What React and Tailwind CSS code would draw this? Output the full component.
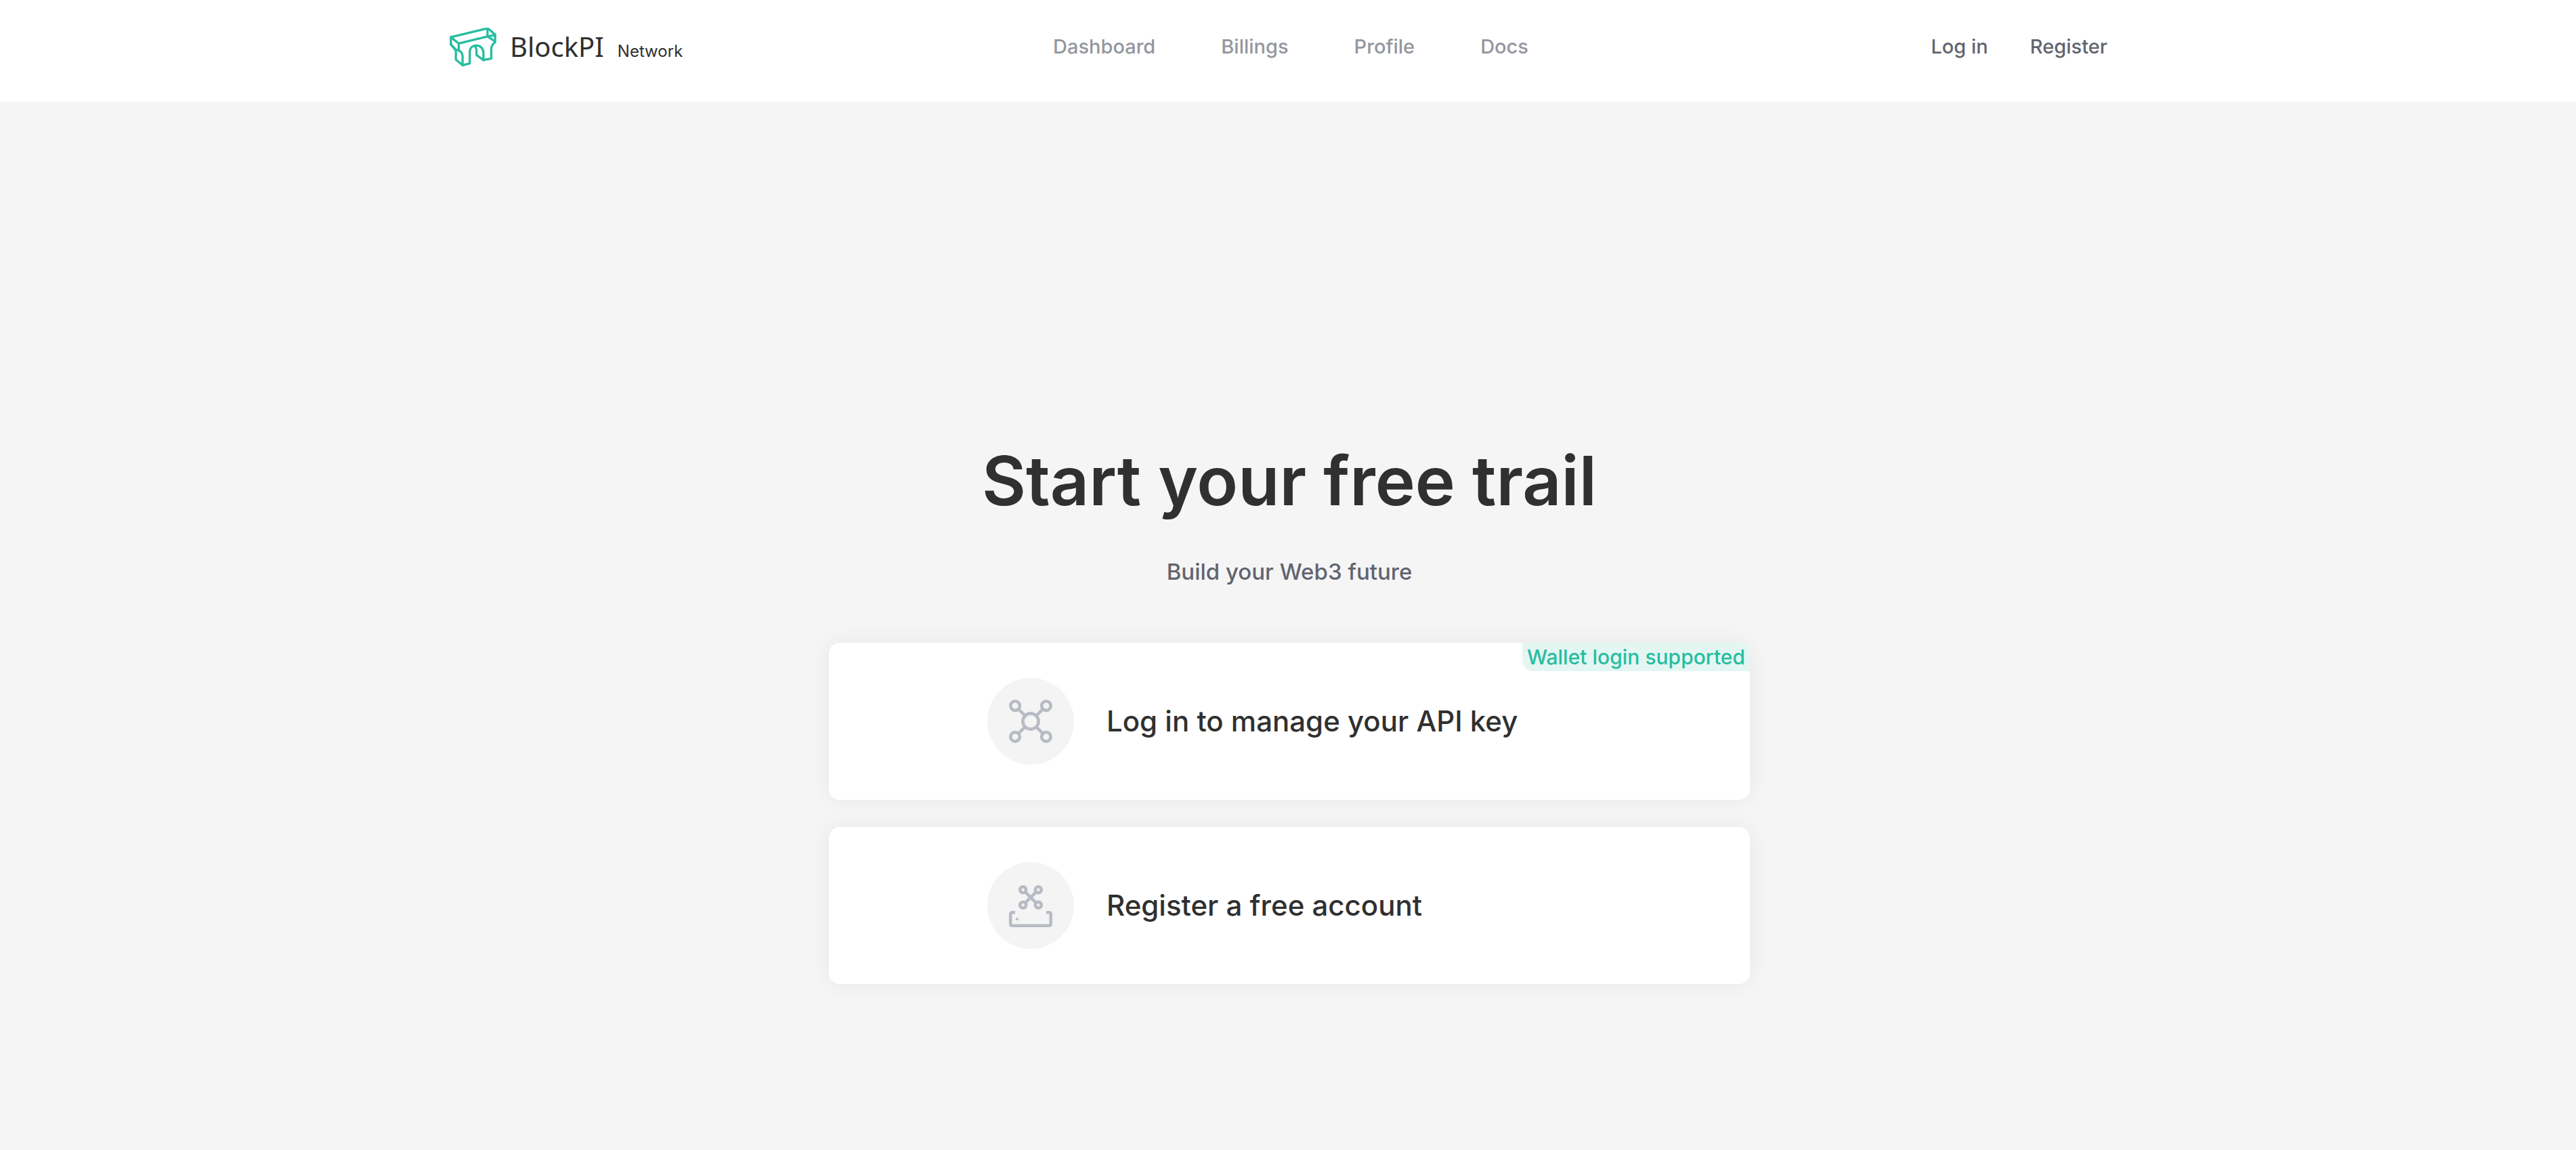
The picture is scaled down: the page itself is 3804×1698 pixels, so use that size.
const NAV_LINKS = ['Dashboard', 'Billings', 'Profile', 'Docs'];

function Logo() {
  return (
    <svg
      viewBox="0 0 207 172"
      className="h-[57px] w-[69px] shrink-0"
      fill="none"
      stroke="#26bda0"
      strokeWidth="10"
      strokeLinecap="round"
      strokeLinejoin="round"
      aria-hidden="true"
    >
      <path d="M5 42 158 5H173L202 30V64C190 74 185 80 185 92V137L150 144L119 121V102C119 94 117 88 112 82" />
      <path d="M5 42V74L27 101V142L57 167L89 159V108C89 88 103 79 118 79C138 79 150 93 150 112V144" />
      <path d="M5 42 40 70L168 39 202 32" />
      <path d="M168 6V38L200 60" />
      <path d="M40 70V101C50 106 57 114 57 127V167" />
      <path d="M5 74 24 95C30 101 35 99 40 101" />
    </svg>
  );
}

function NodesIcon() {
  return (
    <svg viewBox="0 0 64 64" className="size-16" fill="none" stroke="#b8bbc3" strokeWidth="4.6" aria-hidden="true">
      <circle cx="9.1" cy="9.1" r="6.8" />
      <circle cx="54.9" cy="9.1" r="6.8" />
      <circle cx="9.1" cy="54.9" r="6.8" />
      <circle cx="54.9" cy="54.9" r="6.8" />
      <circle cx="32" cy="32" r="11.6" />
      <path d="M13.9 13.9 23.8 23.8M50.1 13.9 40.2 23.8M13.9 50.1 23.8 40.2M50.1 50.1 40.2 40.2" />
    </svg>
  );
}

function TrayIcon() {
  return (
    <svg viewBox="0 0 64 64" className="size-16" fill="none" stroke="#b8bbc3" strokeWidth="4.6" aria-hidden="true">
      <circle cx="20.7" cy="8.7" r="4.5" />
      <circle cx="43.3" cy="8.7" r="4.5" />
      <circle cx="20.7" cy="31.3" r="4.5" />
      <circle cx="43.3" cy="31.3" r="4.5" />
      <path d="M23.9 11.9 40.1 28.1M40.1 11.9 23.9 28.1" />
      <path d="M9 42.2H5Q2.2 42.2 2.2 45V59Q2.2 61.8 5 61.8H59Q61.8 61.8 61.8 59V45Q61.8 42.2 59 42.2H55" />
      <circle cx="12" cy="52" r="2" fill="#b8bbc3" stroke="none" />
    </svg>
  );
}

function ActionCard({ icon, label, badge }) {
  return (
    <a
      href="#"
      className="relative flex items-center gap-12 rounded-2xl bg-white px-[234px] py-[52px] text-[42px] leading-[64px] font-medium text-[#303030] shadow-[0_0_32px_rgba(0,0,0,0.06)]"
    >
      <span className="flex size-32 shrink-0 items-center justify-center rounded-full bg-[#f4f4f4]">{icon}</span>
      <span>{label}</span>
      {badge && (
        <span className="absolute top-0 right-0 rounded-tr-2xl rounded-bl-2xl bg-[#e4f6f2] px-[7px] text-[30px] leading-[42px] text-[#26bda0]">
          {badge}
        </span>
      )}
    </a>
  );
}

export default function App() {
  return (
    <div className="min-h-screen bg-[#f5f5f5] font-['Inter',sans-serif]">
      <header className="bg-white pt-7 pb-10 pl-1">
        <div className="mx-auto grid h-[82px] max-w-[2480px] grid-cols-[1fr_auto_1fr] items-center">
          <a href="#" className="flex items-center gap-5 text-[#303030]">
            <Logo />
            <span className="flex items-baseline gap-5">
              <span className="font-['Noto_Sans',sans-serif] text-[40px] leading-[48px]">BlockPI</span>
              <span className="text-2xl">Network</span>
            </span>
          </a>
          <nav className="flex gap-[97px] pl-1 text-[29px] leading-[42px] font-medium text-[#94969d]">
            {NAV_LINKS.map((name) => (
              <a key={name} href="#">
                {name}
              </a>
            ))}
          </nav>
          <div className="flex justify-end gap-[62px] pr-8 text-[29px] leading-[42px] font-medium text-[#62646f]">
            <a href="#">Log in</a>
            <a href="#">Register</a>
          </div>
        </div>
      </header>

      <main className="flex flex-col items-center pt-[500px] pl-1">
        <h1 className="text-[100px] leading-[120px] font-semibold text-[#303030]">Start your free trail</h1>
        <p className="mt-[50px] text-[33px] leading-[48px] font-medium text-[#62646f]">Build your Web3 future</p>
        <div className="mt-[81px] flex w-full max-w-[1360px] flex-col gap-10">
          <ActionCard icon={<NodesIcon />} label="Log in to manage your API key" badge="Wallet login supported" />
          <ActionCard icon={<TrayIcon />} label="Register a free account" />
        </div>
      </main>
    </div>
  );
}
